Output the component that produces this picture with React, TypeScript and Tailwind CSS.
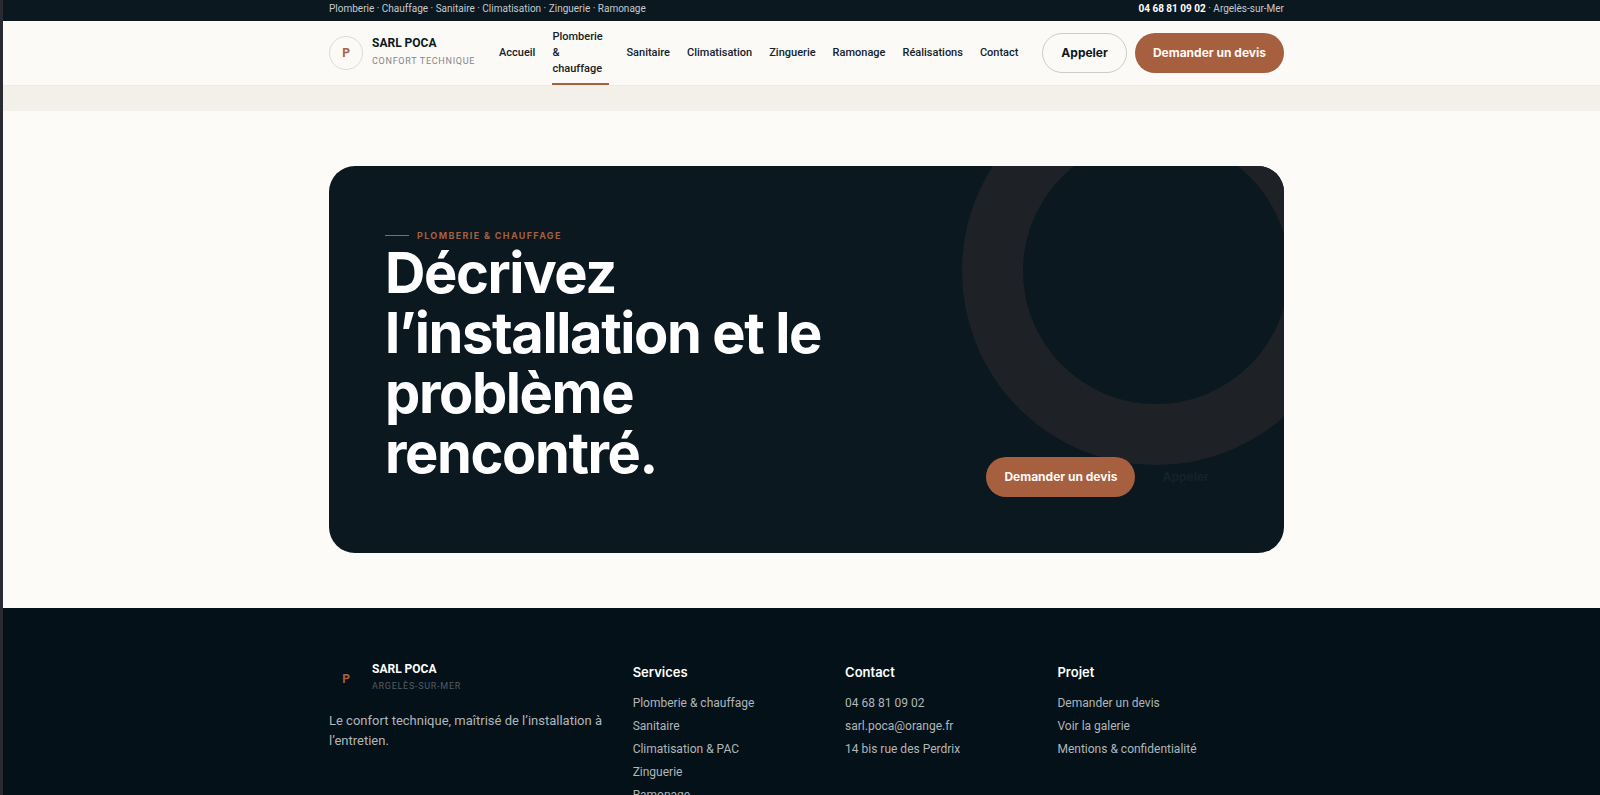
const navLinks = [
  { label: "Accueil" },
  { label: "Plomberie & chauffage", active: true },
  { label: "Sanitaire" },
  { label: "Climatisation" },
  { label: "Zinguerie" },
  { label: "Ramonage" },
  { label: "Réalisations" },
  { label: "Contact" },
];

const footerColumns = [
  {
    title: "Services",
    links: [
      "Plomberie & chauffage",
      "Sanitaire",
      "Climatisation & PAC",
      "Zinguerie",
      "Ramonage",
    ],
  },
  {
    title: "Contact",
    links: ["04 68 81 09 02", "sarl.poca@orange.fr", "14 bis rue des Perdrix"],
  },
  {
    title: "Projet",
    links: ["Demander un devis", "Voir la galerie", "Mentions & confidentialité"],
  },
];

const Container = ({ children }: { children: React.ReactNode }) => (
  <div className="pl-[10px]">
    <div className="mx-auto max-w-[955px]">{children}</div>
  </div>
);

const Buttons = ({ ghost = false }: { ghost?: boolean }) => (
  <div className="flex shrink-0 gap-2 font-[Inter,sans-serif] text-xs font-bold whitespace-nowrap">
    <button
      className={`h-10 rounded-full border px-[18px] ${
        ghost
          ? "order-2 border-transparent text-[#14222b]"
          : "border-[#cbcbc8] text-[#0b1820]"
      }`}
    >
      Appeler
    </button>
    <button className="h-10 rounded-full bg-[#a65f3f] px-[18px] text-[#fffaf5]">
      Demander un devis
    </button>
  </div>
);

const Navbar = () => (
  <header className="border-b border-[#eeebe5] bg-[#fbfaf7]">
    <Container>
      <div className="flex h-16 items-center justify-between">
        <a href="#" className="flex items-center gap-[9px]">
          <span className="flex size-[34px] items-center justify-center rounded-full border border-[#dddbd6] text-xs font-bold text-[#a65f3f]">
            P
          </span>
          <span className="flex flex-col pb-1">
            <span className="text-xs leading-5 font-bold text-[#0b1820]">
              SARL POCA
            </span>
            <span className="text-[9px] leading-4 tracking-[0.08em] whitespace-nowrap text-[#81868a]">
              CONFORT TECHNIQUE
            </span>
          </span>
        </a>
        <nav className="flex items-center gap-[17px]">
          {navLinks.map((link) => (
            <a
              key={link.label}
              href="#"
              className={`relative py-2 text-[11px] leading-4 font-medium text-[#14222b] ${
                link.active
                  ? "w-[57px] after:absolute after:inset-x-0 after:bottom-0 after:h-0.5 after:bg-[#a65f3f]"
                  : ""
              }`}
            >
              {link.label}
            </a>
          ))}
        </nav>
        <Buttons />
      </div>
    </Container>
  </header>
);

const Hero = () => (
  <section className="relative flex items-end justify-between overflow-hidden rounded-[26px] bg-[#0b1820] p-14">
    <div className="absolute -top-[89px] -right-[66px] size-[388px] rounded-full border-[61px] border-[#1e2126]" />
    <div className="relative max-w-[460px] pt-1.5 pb-3.5 font-[Inter,sans-serif]">
      <p className="flex items-center gap-2 text-[9px] leading-[15px] font-bold tracking-[0.15em] text-[#a65f3f]">
        <span className="h-px w-6 bg-[#a65f3f]" />
        PLOMBERIE & CHAUFFAGE
      </p>
      <h1 className="text-[56px] leading-[60px] font-bold tracking-tight text-white">
        Décrivez l’installation et le problème rencontré.
      </h1>
    </div>
    <div className="relative">
      <Buttons ghost />
    </div>
  </section>
);

const Footer = () => (
  <footer className="bg-[#041118] pt-[52px] pb-14">
    <Container>
      <div className="grid grid-cols-[275fr_184fr_184fr_226fr] gap-7">
        <div>
          <a href="#" className="flex items-center gap-[9px]">
            <span className="flex size-[34px] items-center justify-center pt-1 text-xs font-bold text-[#a65f3f]">
              P
            </span>
            <span className="flex flex-col">
              <span className="text-xs leading-[18px] font-bold text-white">
                SARL POCA
              </span>
              <span className="text-[9px] leading-4 tracking-[0.08em] text-[#525d64]">
                ARGELÈS-SUR-MER
              </span>
            </span>
          </a>
          <p className="mt-[17px] text-[13px] leading-5 text-[#b1b6b8]">
            Le confort technique, maîtrisé de l’installation à l’entretien.
          </p>
        </div>
        {footerColumns.map((column) => (
          <div key={column.title}>
            <h2 className="pt-[2px] font-[Inter,sans-serif] text-[13px] leading-5 font-semibold text-white">
              {column.title}
            </h2>
            <ul className="mt-[13px] space-y-[7px]">
              {column.links.map((link) => (
                <li key={link}>
                  <a href="#" className="block text-xs text-[#b1b6b8]">
                    {link}
                  </a>
                </li>
              ))}
            </ul>
          </div>
        ))}
      </div>
    </Container>
  </footer>
);

const App = () => (
  <div className="h-screen overflow-hidden border-l-3 border-[#2a2a33] bg-[#fcfbf7] font-[Roboto,sans-serif]">
    <div className="bg-[#0b1820] pb-1 text-[10px] leading-[17px] text-[#c5cace]">
      <Container>
        <div className="flex justify-between">
          <p>
            Plomberie · Chauffage · Sanitaire · Climatisation · Zinguerie ·
            Ramonage
          </p>
          <p>
            <strong className="text-white">04 68 81 09 02</strong> ·
            Argelès-sur-Mer
          </p>
        </div>
      </Container>
    </div>
    <Navbar />
    <div className="h-[25px] bg-[#f3f0ea]" />
    <main className="py-[55px]">
      <Container>
        <Hero />
      </Container>
    </main>
    <Footer />
  </div>
);

export default App;
